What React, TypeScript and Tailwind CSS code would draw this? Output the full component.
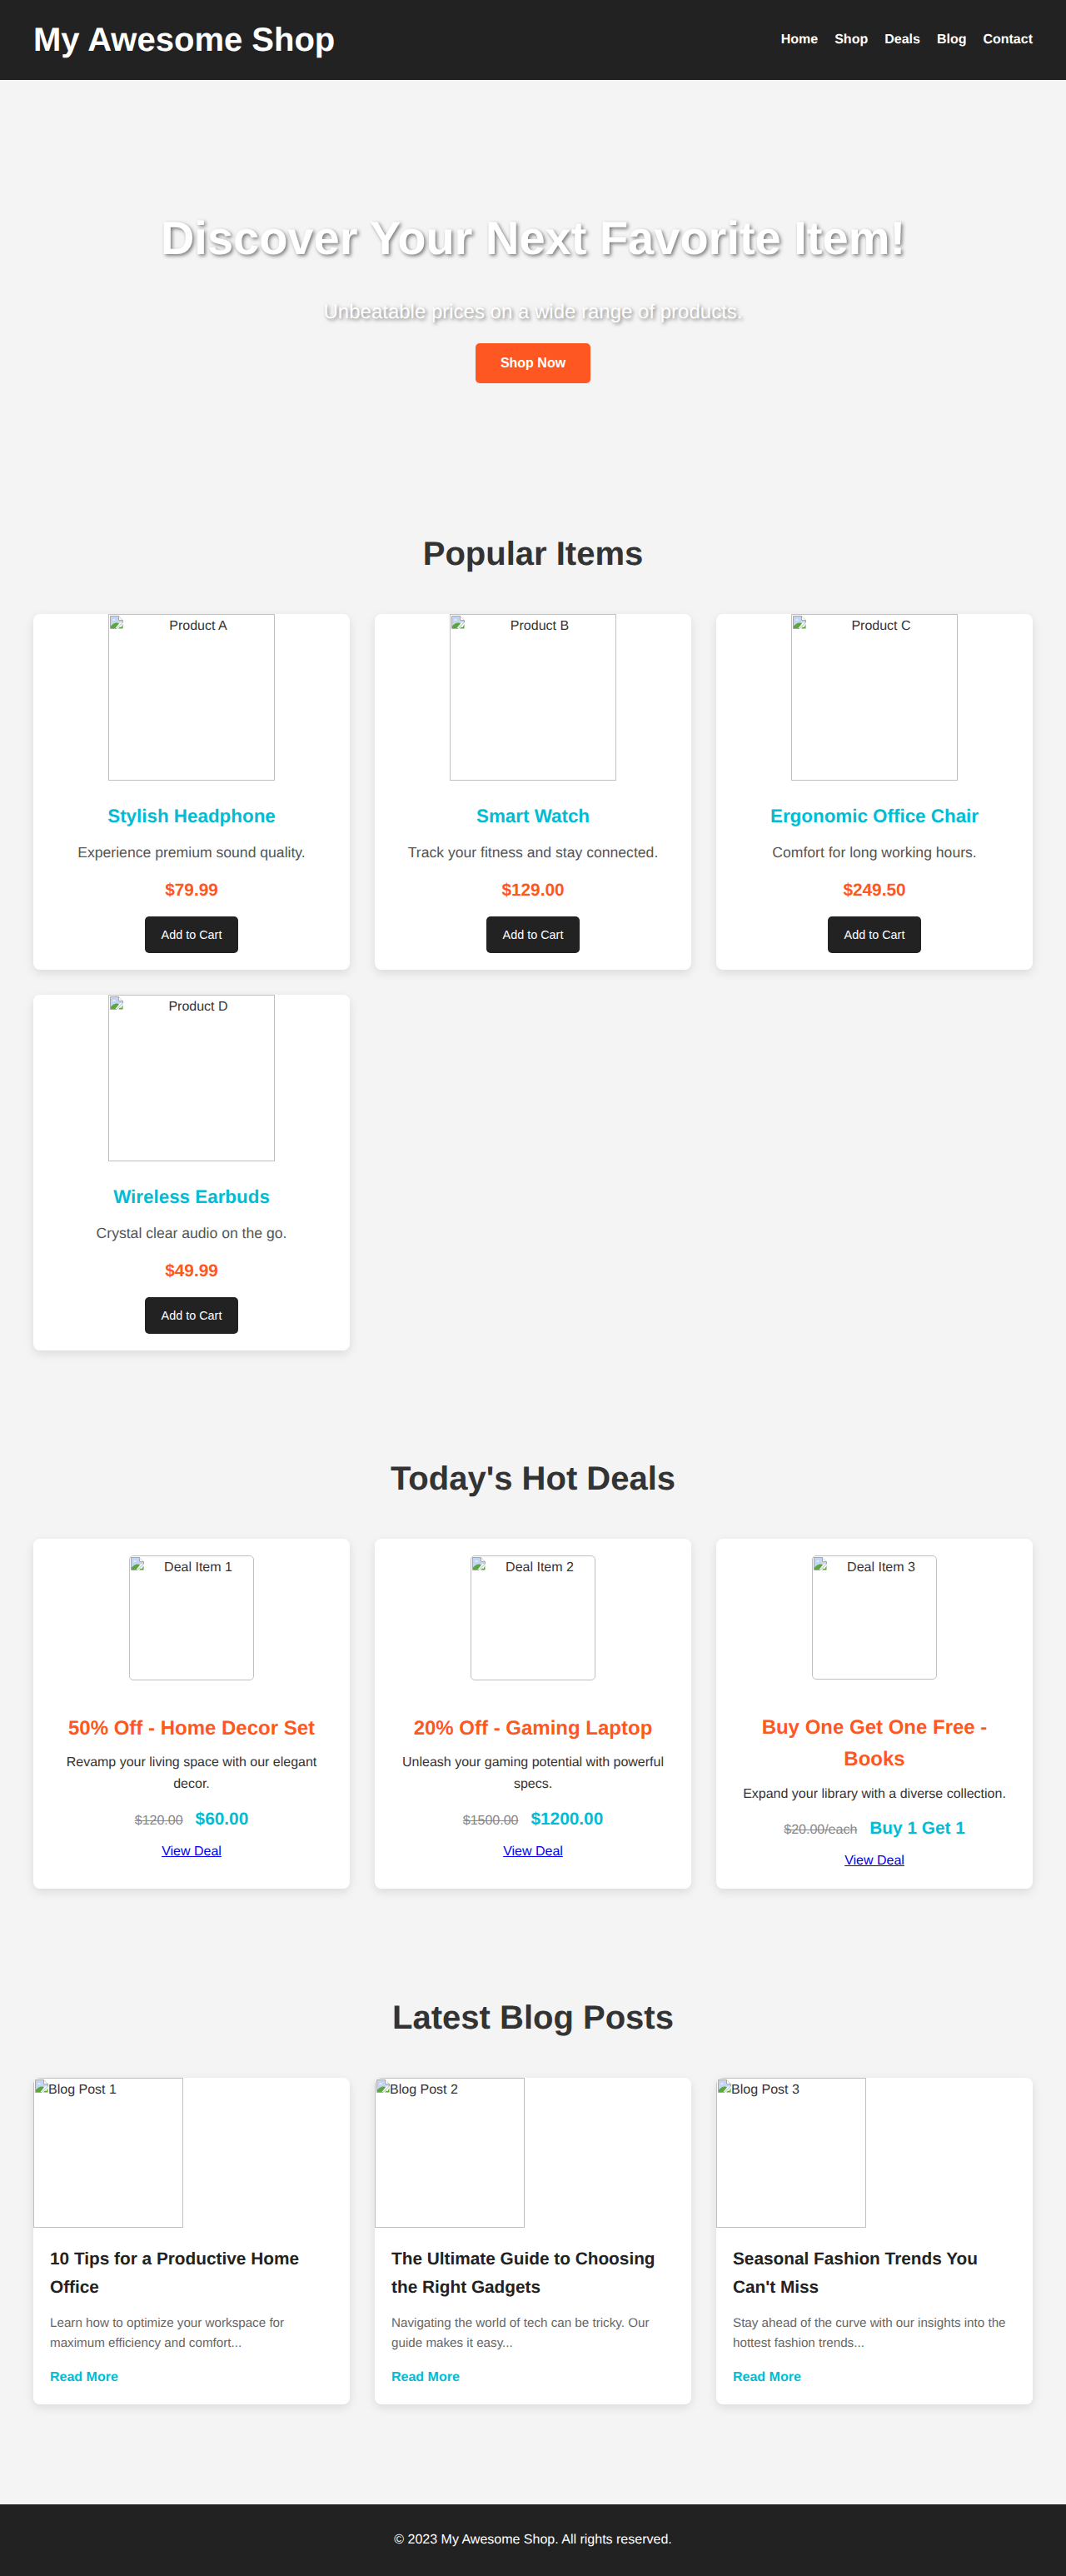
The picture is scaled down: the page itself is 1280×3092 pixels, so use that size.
const products = [
  { alt: "Product A", name: "Stylish Headphone", desc: "Experience premium sound quality.", price: "$79.99" },
  { alt: "Product B", name: "Smart Watch", desc: "Track your fitness and stay connected.", price: "$129.00" },
  { alt: "Product C", name: "Ergonomic Office Chair", desc: "Comfort for long working hours.", price: "$249.50" },
  { alt: "Product D", name: "Wireless Earbuds", desc: "Crystal clear audio on the go.", price: "$49.99" },
];

const deals = [
  { alt: "Deal Item 1", name: "50% Off - Home Decor Set", desc: "Revamp your living space with our elegant decor.", was: "$120.00", now: "$60.00" },
  { alt: "Deal Item 2", name: "20% Off - Gaming Laptop", desc: "Unleash your gaming potential with powerful specs.", was: "$1500.00", now: "$1200.00" },
  { alt: "Deal Item 3", name: "Buy One Get One Free - Books", desc: "Expand your library with a diverse collection.", was: "$20.00/each", now: "Buy 1 Get 1" },
];

const posts = [
  { alt: "Blog Post 1", title: "10 Tips for a Productive Home Office", desc: "Learn how to optimize your workspace for maximum efficiency and comfort..." },
  { alt: "Blog Post 2", title: "The Ultimate Guide to Choosing the Right Gadgets", desc: "Navigating the world of tech can be tricky. Our guide makes it easy..." },
  { alt: "Blog Post 3", title: "Seasonal Fashion Trends You Can't Miss", desc: "Stay ahead of the curve with our insights into the hottest fashion trends..." },
];

const navLinks = ["Home", "Shop", "Deals", "Blog", "Contact"];

// Chrome's broken image glyph
function BrokenIcon() {
  return (
    <svg viewBox="0 0 16 16" className="float-left h-4 w-4" aria-hidden="true">
      <path d="M0.5 0.5H10.5L15.5 5.5V8L8 15.5H0.5Z" fill="#ffffff" stroke="#a8a8a8" />
      <path d="M1 1H10V6H15V8L12 8.5L8 12L1 15Z" fill="#c3d4f5" />
      <path d="M3 5.5Q5 3 7 5.5Z" fill="#ffffff" />
      <path d="M1 15V12.5Q5 8 9 8.5L11 9.5L6.5 15Z" fill="#5aa83c" />
      <path d="M10.5 0.5V5.5H15.5" fill="#ffffff" stroke="#a8a8a8" />
      <path d="M15.5 10V15.5H10L12 13.5L13.5 14L15 11Z" fill="#5aa83c" />
    </svg>
  );
}

function BrokenImage({ alt, className }: { alt: string; className: string }) {
  return (
    <div className={`overflow-hidden border border-[#c0c0c0] text-[#333] ${className}`}>
      <div className="p-px">
        <BrokenIcon />
        {alt}
      </div>
    </div>
  );
}

function SectionTitle({ children }: { children: string }) {
  return (
    <h2 className="mb-9 text-center text-[40px] font-bold leading-[72px] text-[#333]">{children}</h2>
  );
}

const cardClass = "rounded-lg bg-white shadow-[0_4px_12px_rgba(0,0,0,0.1)]";

export default function App() {
  return (
    <div className="bg-[#f4f4f4] font-['Liberation_Sans',Arial,sans-serif] text-base leading-[25.6px] text-[#333] [text-rendering:geometricPrecision]">
      <header className="flex h-24 items-center justify-between bg-[#222] px-10 text-white">
        <h1 className="text-[40px] font-bold leading-[64px]">My Awesome Shop</h1>
        <nav className="flex gap-5 font-bold">
          {navLinks.map((link) => (
            <a key={link} href="#">{link}</a>
          ))}
        </nav>
      </header>

      <section className="flex h-[464px] flex-col items-center pt-[145px] text-center text-white [text-shadow:2px_2px_4px_rgba(0,0,0,0.5)]">
        <h2 className="text-[56px] font-bold leading-[90px]">Discover Your Next Favorite Item!</h2>
        <p className="mt-[25px] text-2xl leading-[38.4px]">Unbeatable prices on a wide range of products.</p>
        <button className="mt-[18px] rounded-[5px] bg-[#ff5722] px-[30px] py-[15px] font-bold leading-[18px] [text-shadow:none]">
          Shop Now
        </button>
      </section>

      <section className="px-10 pt-[69px]">
        <SectionTitle>Popular Items</SectionTitle>
        <div className="grid grid-cols-3 gap-[30px]">
          {products.map((p) => (
            <div key={p.alt} className={`${cardClass} flex h-[427px] flex-col items-center text-center`}>
              <BrokenImage alt={p.alt} className="h-[200px] w-[200px]" />
              <h3 className="mt-[25px] text-[22.4px] font-bold leading-[36px] text-[#00bcd4]">{p.name}</h3>
              <p className="mt-[11px] text-[17.6px] leading-[28px] text-[#555]">{p.desc}</p>
              <p className="mt-[15px] text-[20.8px] font-bold leading-[33px] text-[#ff5722]">{p.price}</p>
              <button className="mt-[15px] rounded-[5px] bg-[#222] px-[20px] py-[14px] text-[14.4px] leading-[16px] text-white">
                Add to Cart
              </button>
            </div>
          ))}
        </div>
      </section>

      <section className="px-10 pt-[118px]">
        <SectionTitle>Today's Hot Deals</SectionTitle>
        <div className="grid grid-cols-3 gap-[30px]">
          {deals.map((d) => (
            <div key={d.alt} className={`${cardClass} flex h-[420px] flex-col items-center p-5 text-center`}>
              <BrokenImage alt={d.alt} className="h-[150px] w-[150px] rounded-[5px]" />
              <h3 className="mt-[39px] text-2xl font-bold leading-[38.4px] text-[#ff5722]">{d.name}</h3>
              <p className="mt-[9px]">{d.desc}</p>
              <p className="mt-[12px] leading-[33px]">
                <span className="mr-[15px] text-[#888] line-through">{d.was}</span>
                <span className="text-[20.8px] font-bold text-[#00bcd4]">{d.now}</span>
              </p>
              <a href="#" className="mt-[8px] text-[#0000ee] underline">View Deal</a>
            </div>
          ))}
        </div>
      </section>

      <section className="px-10 pb-[120px] pt-[119px]">
        <SectionTitle>Latest Blog Posts</SectionTitle>
        <div className="grid grid-cols-3 gap-[30px]">
          {posts.map((post) => (
            <div key={post.alt} className={`${cardClass} h-[392px] overflow-hidden`}>
              <BrokenImage alt={post.alt} className="h-[180px] w-[180px]" />
              <div className="px-5 pt-[21px]">
                <h3 className="text-[20.8px] font-bold leading-[34px] text-[#222]">{post.title}</h3>
                <p className="mt-[14px] text-[15.2px] leading-[24px] text-[#666]">{post.desc}</p>
                <a href="#" className="mt-[16px] block font-bold text-[#00bcd4]">Read More</a>
              </div>
            </div>
          ))}
        </div>
      </section>

      <footer className="h-[86px] bg-[#222] py-[30px] text-center text-white">
        © 2023 My Awesome Shop. All rights reserved.
      </footer>
    </div>
  );
}
